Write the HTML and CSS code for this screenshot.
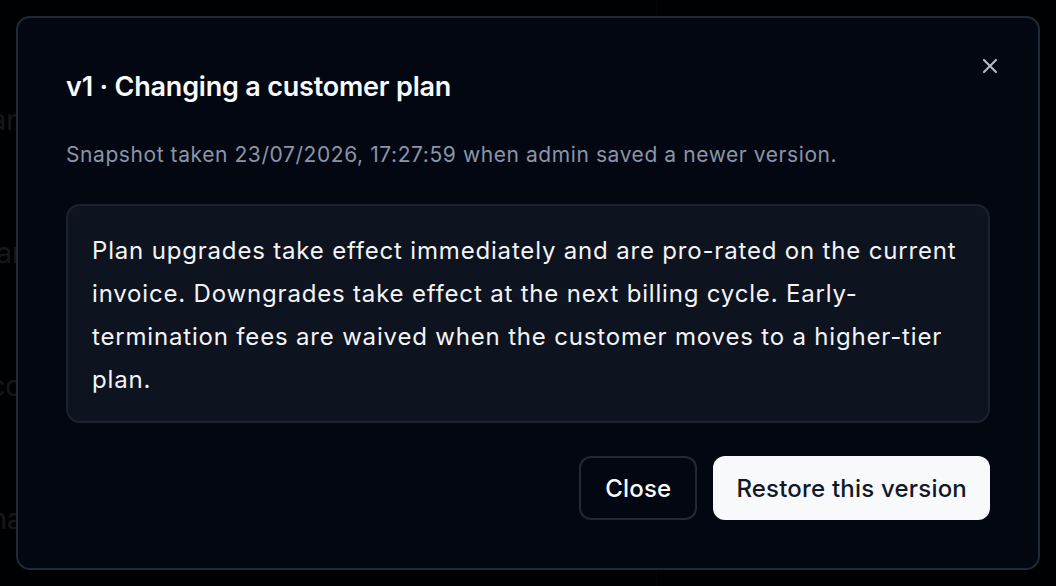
FILE: index.html
```html
<!DOCTYPE html>
<html lang="en">

<head>
    <meta charset="UTF-8">
    <meta name="viewport" content="width=device-width, initial-scale=1.0">
    <title>Version history</title>
    <link rel="stylesheet" href="styles.css">
</head>

<body>
    <div class="page">
        <div class="list">
            <div class="row">Cancellation policy and refunds</div>
            <div class="row">Warranty and returns</div>
            <div class="row">Account transfers</div>
            <div class="row">Changing a customer plan</div>
        </div>
        <div class="side"></div>
    </div>

    <div class="backdrop"></div>

    <div class="modal">
        <button class="modal-x" aria-label="Close">
            <svg width="24" height="24" viewBox="0 0 24 24" fill="none" stroke="currentColor" stroke-width="2.2" stroke-linecap="round">
                <path d="M18 6 6 18" />
                <path d="m6 6 12 12" />
            </svg>
        </button>
        <h2 class="modal-title">v1 · Changing a customer plan</h2>
        <p class="modal-meta">Snapshot taken 23/07/2026, 17:27:59 when admin saved a newer version.</p>
        <div class="snapshot">
            Plan upgrades take effect immediately and are pro-rated on the current invoice. Downgrades take effect at the next billing cycle. Early-termination fees are waived when the customer moves to a higher-tier plan.
        </div>
        <div class="actions">
            <button class="button button-outline">Close</button>
            <button class="button button-primary">Restore this version</button>
        </div>
    </div>
</body>

</html>
```

FILE: styles.css
```css
body {
    margin: 0;
    font-family: Inter, "Noto Sans", sans-serif;
    background-color: #030712;
    color: #f9fafb;
    width: 1056px;
    height: 586px;
    overflow: hidden;
}

.page {
    display: flex;
    height: 586px;
    overflow: hidden;
}

.list {
    width: 656px;
    padding-top: 103px;
    border-right: 1px solid #1f2937;
}

.row {
    height: 133px;
    margin-left: -30px;
    font-size: 28px;
    line-height: 34px;
    color: #9ca3af;
    white-space: nowrap;
}

.side {
    flex: 1;
}

.backdrop {
    position: fixed;
    inset: 0;
    background-color: rgba(0, 0, 0, 0.86);
}

.modal {
    position: fixed;
    left: 16px;
    top: 16px;
    width: 1024px;
    height: 554px;
    box-sizing: border-box;
    padding: 52px 48px 48px;
    background-color: #030712;
    border: 2px solid #1f2937;
    border-radius: 14px;
    display: flex;
    flex-direction: column;
}

.modal-x {
    position: absolute;
    top: 36px;
    right: 36px;
    padding: 0;
    border: none;
    background: none;
    color: #b4b8c0;
    cursor: pointer;
}

.modal-title {
    margin: 0;
    font-size: 27px;
    font-weight: 600;
    line-height: 34px;
    letter-spacing: -0.2px;
}

.modal-meta {
    margin: 36px 0 0;
    font-size: 21px;
    line-height: 30px;
    letter-spacing: 0.58px;
    color: #8b95a7;
}

.snapshot {
    margin-top: 34px;
    padding: 23px 24px 20px;
    background-color: #0e1320;
    border: 2px solid #1b2231;
    border-radius: 14px;
    font-size: 24px;
    line-height: 43px;
    letter-spacing: 0.82px;
    color: #f3f4f6;
}

.actions {
    display: flex;
    justify-content: flex-end;
    gap: 16px;
    margin-top: 33px;
}

.button {
    height: 64px;
    padding: 0 23px;
    border-radius: 12px;
    font-family: inherit;
    font-size: 24px;
    font-weight: 500;
    letter-spacing: 0.2px;
    cursor: pointer;
}

.button-outline {
    padding: 0 24px;
    background-color: #030712;
    color: #f9fafb;
    border: 2px solid #1f2937;
}

.button-primary {
    background-color: #f8f9fb;
    color: #111827;
    border: none;
}
```
